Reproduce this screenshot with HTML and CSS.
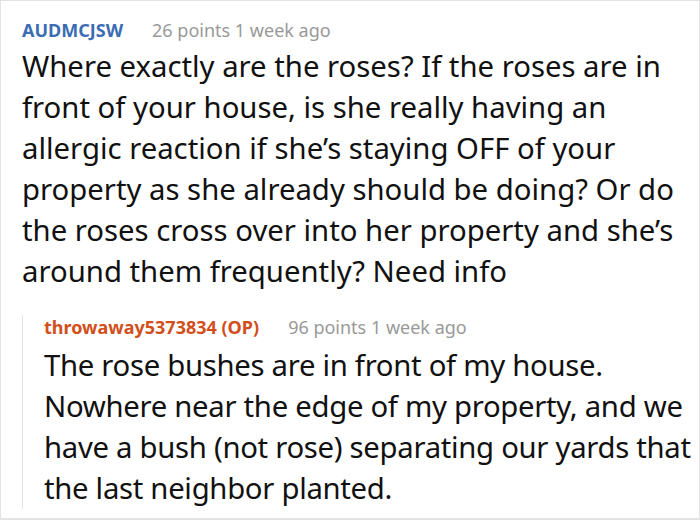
FILE: index.html
```html
<!DOCTYPE html>
<html>
<head>
<meta charset="utf-8">
<link rel="stylesheet" href="styles.css">
</head>
<body>
<div class="frame">
  <div class="comment">
    <div class="meta"><span class="author">AUDMCJSW</span><span class="info">26 points 1 week ago</span></div>
    <p class="body">Where exactly are the roses? If the roses are in front of your house, is she really having an allergic reaction if she’s staying OFF of your property as she already should be doing? Or do the roses cross over into her property and she’s around them frequently? Need info</p>
    <div class="reply">
      <div class="meta"><span class="author op">throwaway5373834 (OP)</span><span class="info">96 points 1 week ago</span></div>
      <p class="body">The rose bushes are in front of my house. Nowhere near the edge of my property, and we have a bush (not rose) separating our yards that the last neighbor planted.</p>
    </div>
  </div>
</div>
</body>
</html>
```
FILE: styles.css
```css
html, body { margin: 0; padding: 0; background: #fff; }
.frame {
  width: 700px;
  height: 520px;
  box-sizing: border-box;
  border: 1px solid #e3e3e3;
  border-bottom-width: 2px;
  overflow: hidden;
  font-family: "Noto Sans", "Open Sans", sans-serif;
}
.comment { padding: 17px 2px 0 21px; }
.meta { font-size: 18px; line-height: 24px; display: flex; gap: 29px; }
.author { color: #3b6cb4; font-weight: 700; }
.author.op { color: #d24f1b; }
.info { color: #999; }
.body {
  margin: 4px 0 0 0;
  max-width: 670px;
  font-size: 29.3px;
  line-height: 41px;
  color: #111;
}
.reply {
  margin-top: 33px;
  border-left: 1px solid #e2e2e2;
  padding-left: 21px;
}
.reply .meta { margin-top: -10px; }
.reply .body {
  margin-top: 6px;
  margin-bottom: -7px;
  max-width: none;
  letter-spacing: -0.3px;
}
```
